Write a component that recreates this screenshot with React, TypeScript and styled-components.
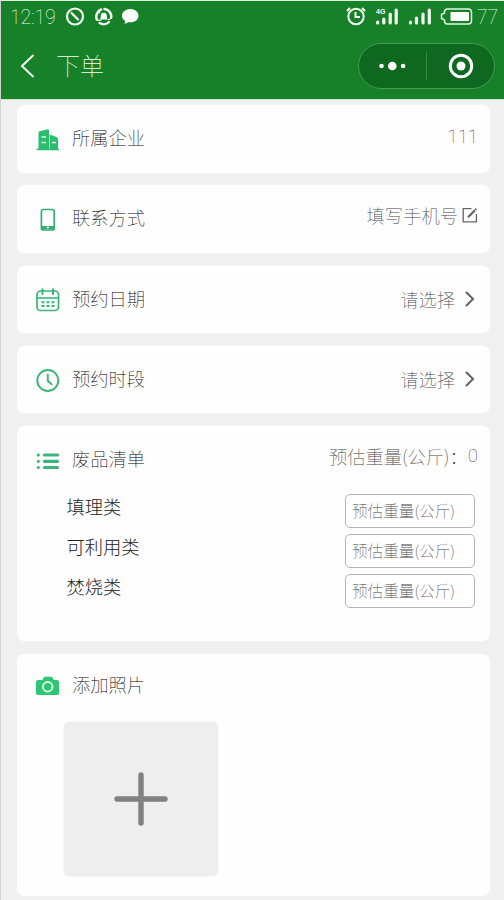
import React from "react";
import styled, { createGlobalStyle } from "styled-components";

const GlobalStyle = createGlobalStyle`
  * { box-sizing: border-box; }
  body {
    margin: 0;
    background: #f0f0f0;
    font-family: "Noto Sans CJK SC", "Noto Sans", sans-serif;
    font-weight: 100;
  }
`;

const Page = styled.div`
  width: 504px;
  height: 900px;
  overflow: hidden;
  background: #f0f0f0;
  border-left: 1px solid #d2d2d2;
`;

const Header = styled.header`
  height: 100px;
  margin-left: -1px;
  background: #168128;
  border-top: 1px solid #d9f3dc;
  border-bottom: 1px solid #c6e8ca;
  color: #f4fff4;
`;

const StatusBar = styled.div`
  height: 33px;
  display: flex;
  justify-content: space-between;
  padding: 0 5px 0 10px;
`;

const StatusGroup = styled.div`
  display: flex;
  align-items: center;
`;

const StatusText = styled.span<{ $width: number }>`
  width: ${(p) => p.$width}px;
  font-family: Roboto, "Noto Sans", sans-serif;
  font-size: 19.5px;
  font-weight: 100;
  line-height: 20px;
  padding-top: 1px;
  white-space: nowrap;
  letter-spacing: -0.1px;
`;

const NavBar = styled.div`
  height: 64px;
  display: flex;
  align-items: center;
  padding: 0 9px 0 20px;
`;

const NavTitle = styled.h1`
  margin: 0 auto 3px 21px;
  font-size: 24px;
  line-height: 36px;
  font-weight: 100;
`;

const Capsule = styled.div`
  width: 137px;
  height: 46px;
  border: 1px solid #459b50;
  border-radius: 23px;
  background: #0e681f;
  display: flex;
  align-items: center;
`;

const CapsuleButton = styled.button`
  flex: 1;
  height: 30px;
  padding: 0;
  border: 0;
  background: none;
  display: flex;
  align-items: center;
  justify-content: center;
`;

const CapsuleDivider = styled.i`
  width: 1px;
  height: 28px;
  background: #388743;
`;

const Cards = styled.main`
  display: flex;
  flex-direction: column;
  gap: 12.8px;
  padding: 5px 14px 0 16px;
`;

const Card = styled.section<{ $height: number }>`
  height: ${(p) => p.$height}px;
  border-radius: 8px;
  background: #fefefe;
  box-shadow: 0 0 3px #f8f8f8;
`;

const CardHead = styled.div<{ $height?: number }>`
  height: ${(p) => p.$height ?? 67}px;
  display: flex;
  align-items: center;
  padding: 0 12px 0 18px;
`;

const IconSlot = styled.span`
  width: 25px;
  height: 25px;
  margin-top: 3px;
  display: flex;
`;

const Label = styled.span`
  margin: 0 auto 3px 12px;
  font-size: 18.3px;
  line-height: 26px;
  color: #000;
`;

const Value = styled.span<{ $lift?: number; $gap?: number }>`
  display: flex;
  align-items: center;
  gap: ${(p) => p.$gap ?? 0}px;
  font-size: 18.3px;
  line-height: 26px;
  color: #444;
  margin-bottom: ${(p) => p.$lift ?? 0}px;
`;

const Digits = styled.span`
  font-family: Roboto, "Noto Sans", sans-serif;
  font-size: 18.5px;
`;

const WasteList = styled.div`
  display: flex;
  flex-direction: column;
  gap: 6px;
  padding: 0 15px 0 49.5px;
  margin-top: 1px;
`;

const WasteRow = styled.label`
  height: 34px;
  display: flex;
  justify-content: space-between;
`;

const WasteName = styled.span`
  margin-top: -1.5px;
  font-size: 18.3px;
  font-weight: 300;
  line-height: 26px;
  color: #222;
`;

const WeightInput = styled.input`
  width: 130px;
  height: 34px;
  padding: 0 6px 3px;
  border: 1px solid #b5b5b5;
  border-radius: 5px;
  background: #fff;
  outline: none;
  font-family: inherit;
  font-size: 15.6px;
  font-weight: 100;
  &::placeholder {
    color: #444;
    opacity: 1;
  }
`;

const AddPhoto = styled.button`
  width: 154px;
  height: 154px;
  margin: 5px 0 0 47px;
  padding: 1px 0 0;
  border: 0;
  border-radius: 6px;
  background: #eee;
  box-shadow: 0 0 2px #e4e4e4;
  display: flex;
  align-items: center;
  justify-content: center;
`;

const green = "#2fb673";

const StatusLeftIcons = () => (
  <svg width="78" height="24" viewBox="62 6 78 24" fill="none">
    <circle cx="75" cy="16.500" r="8" stroke="#f2fff2" strokeWidth="2.200" />
    <path d="M71.500 13l6.500 6.500" stroke="#f2fff2" strokeWidth="2.200" strokeLinecap="round" />
    <g stroke="#f2fff2" strokeLinecap="round">
      <path d="M96.800 19.500a7.800 7.800 0 0 1 4.200-10" strokeWidth="2.500" />
      <path d="M104.500 9a7.800 7.800 0 0 1 6.800 8.500" strokeWidth="2.500" />
      <path d="M109 22a8 8 0 0 1-9.500 1" strokeWidth="2.200" />
      <path d="M101 9.500c-1.500 1-2 2.300-1.800 3.500M111.300 17.500c-.8 1.500-2 2.200-3.300 2M96.800 19.500c1.500 1 3 1 4.200.3" strokeWidth="1.200" />
    </g>
    <circle cx="103.800" cy="15.800" r="3" fill="#fff" />
    <path d="M100.900 16h5.800l.6 3.400h-7z" fill="#fff" />
    <path d="M130.500 9c4.600 0 8 3 8 6.700s-3.400 6.600-8 6.600c-.8 0-1.500-.1-2.300-.2-.9 1-2.400 1.700-4 1.700.8-.8 1-1.700 1-2.700-2-1.300-3.200-3.200-3.200-5.400 0-3.700 3.600-6.700 8.500-6.700z" fill="#fff" />
  </svg>
);

const StatusRightIcons = () => (
  <svg width="132" height="24" viewBox="344 6 132 24" fill="none">
    <g stroke="#f2fff2" strokeWidth="2">
      <circle cx="355" cy="16.500" r="7.700" />
      <path d="M354.500 12v5h4.500" />
      <path d="M346.500 10.500l2-2M363.500 10.500l-2-2" strokeLinecap="round" />
    </g>
    <g stroke="#f2fff2" strokeWidth="3.200" strokeLinecap="round">
      <path d="M376.700 22v1M382.800 19v4M389.200 14v9M395.200 10v13" />
      <path d="M409.500 22v1M415.500 18v5M422 14v9M428.300 10v13" />
    </g>
    <text x="375" y="13.500" fill="#fff" fontSize="7" fontWeight="700" fontFamily="Liberation Sans, sans-serif">4G</text>
    <path d="M443.500 13V12a3 3 0 0 1 3-3h21a3 3 0 0 1 3 3v9a3 3 0 0 1-3 3h-21a3 3 0 0 1-3-3v-1l-3-1.500v-4z" stroke="#e0f8e0" strokeWidth="1.500" />
    <rect x="449.500" y="12" width="18.500" height="9" rx="1" fill="#fff" />
  </svg>
);

const BackIcon = () => (
  <svg width="15" height="26" viewBox="0 0 15 26" fill="none">
    <path d="M13 2.500L2 13l11 10.500" stroke="#f2fff2" strokeWidth="2" strokeLinecap="round" />
  </svg>
);

const MoreIcon = () => (
  <svg width="28" height="12" viewBox="0.700 0 28 12" fill="#fff">
    <circle cx="3.200" cy="6" r="2.300" />
    <circle cx="14" cy="6" r="4.300" />
    <circle cx="24.800" cy="6" r="2.300" />
  </svg>
);

const TargetIcon = () => (
  <svg width="26" height="26" viewBox="0 0 26 26" fill="none">
    <circle cx="13" cy="13" r="10.700" stroke="#fff" strokeWidth="3" />
    <circle cx="13" cy="13" r="4.500" fill="#fff" />
  </svg>
);

const CompanyIcon = () => (
  <svg width="25" height="25" viewBox="0 0 25 25">
    <path d="M3.500 22V4.500L4.500 3.300l8.500-2 1 .8V22zM14.600 22V6.500l7 2.500 1.400 1.500V22z" fill="#2bbd6e" />
    <path d="M1.500 21.500h22.500" stroke={green} strokeWidth="1.500" />
    <path d="M6.500 9h4.500M6.500 14.500h4.500M17 14.500h4" stroke="#dbffe9" strokeWidth="1.300" />
  </svg>
);

const PhoneIcon = () => (
  <svg width="25" height="25" viewBox="0 0 25 25" fill="none">
    <rect x="6.400" y="1.500" width="12.800" height="20.500" rx="1.800" stroke="#37ae72" strokeWidth="1.700" />
    <path d="M6 18h13.500v3.500H6z" fill="#37ae72" />
    <circle cx="12.800" cy="19.600" r="1.100" fill="#fff" />
  </svg>
);

const CalendarIcon = () => (
  <svg width="25" height="25" viewBox="0 0 25 25" fill="none" stroke="#39b578">
    <rect x="2" y="3" width="21.500" height="19.500" rx="3.500" strokeWidth="1.700" />
    <path d="M2 10h21.500" strokeWidth="1.600" />
    <path d="M7.500 1.300v5M18 1.300v5" strokeWidth="2" strokeLinecap="round" />
    <path d="M6.500 14.200h13M6.500 18h13" strokeWidth="1.900" strokeDasharray="3 2" />
  </svg>
);

const ClockIcon = () => (
  <svg width="25" height="25" viewBox="0 0 25 25" fill="none" stroke="#39b578">
    <circle cx="12.800" cy="12.500" r="10.500" strokeWidth="1.900" />
    <path d="M12.800 6.500v6.300l3.700 3.500" strokeWidth="1.900" strokeLinecap="round" strokeLinejoin="round" />
  </svg>
);

const ListIcon = () => (
  <svg width="25" height="25" viewBox="0 0 25 25" stroke="#3bb57b" strokeWidth="3.200" strokeLinecap="round">
    <path d="M3.300 6h.01M3.300 12.300h.01M3.300 18.500h.01M9.500 6h13M9.500 12.300h13M9.500 18.500h13" />
  </svg>
);

const CameraIcon = () => (
  <svg width="25" height="25" viewBox="0 0 25 25">
    <path d="M3 6h4.500l1.200-2.600L10 2.700h6l1.500.7L18.700 6H22a2 2 0 0 1 2 2v11a2 2 0 0 1-2 2H3a2 2 0 0 1-2-2V8a2 2 0 0 1 2-2z" fill="#2fc673" />
    <circle cx="12.700" cy="12.800" r="4.800" fill="none" stroke="#d9fbe6" strokeWidth="1.900" />
  </svg>
);

const EditIcon = () => (
  <svg width="16" height="16" viewBox="0 0 16 16" fill="none" stroke="#666" strokeWidth="1.300">
    <path d="M9.500 1.600H1.200v13.200h13.200V7" />
    <path d="M6 10.200L13 3.200" strokeWidth="2.300" />
    <path d="M13.300 2.700l1-1" strokeWidth="2" />
  </svg>
);

const ChevronIcon = () => (
  <svg width="10" height="16" viewBox="0 0 10 16" fill="none">
    <path d="M1.500 1.500L8 8l-6.500 6.500" stroke="#666" strokeWidth="2.100" strokeLinecap="round" />
  </svg>
);

const PlusIcon = () => (
  <svg width="56" height="56" viewBox="0 0 56 56" stroke="#818181" strokeWidth="5.400" strokeLinecap="round">
    <path d="M28 4v48M4 28h48" />
  </svg>
);

const ChooseValue = styled(Value)`
  padding-right: 3px;
`;

const wasteKinds = ["填理类", "可利用类", "焚烧类"];

export default function App() {
  return (
    <Page>
      <GlobalStyle />
      <Header>
        <StatusBar>
          <StatusGroup>
            <StatusText $width={52}>12:19</StatusText>
            <StatusLeftIcons />
          </StatusGroup>
          <StatusGroup>
            <StatusRightIcons />
            <StatusText $width={22}>77</StatusText>
          </StatusGroup>
        </StatusBar>
        <NavBar>
          <BackIcon />
          <NavTitle>下单</NavTitle>
          <Capsule>
            <CapsuleButton aria-label="more"><MoreIcon /></CapsuleButton>
            <CapsuleDivider />
            <CapsuleButton aria-label="close"><TargetIcon /></CapsuleButton>
          </Capsule>
        </NavBar>
      </Header>
      <Cards>
        <Card $height={67.5}>
          <CardHead>
            <IconSlot><CompanyIcon /></IconSlot>
            <Label>所属企业</Label>
            <Value $lift={4}><Digits>111</Digits></Value>
          </CardHead>
        </Card>
        <Card $height={67.5}>
          <CardHead>
            <IconSlot><PhoneIcon /></IconSlot>
            <Label>联系方式</Label>
            <Value $lift={7} $gap={4}>填写手机号<EditIcon /></Value>
          </CardHead>
        </Card>
        <Card $height={67.5}>
          <CardHead>
            <IconSlot><CalendarIcon /></IconSlot>
            <Label>预约日期</Label>
            <ChooseValue $gap={10}>请选择<ChevronIcon /></ChooseValue>
          </CardHead>
        </Card>
        <Card $height={67.5}>
          <CardHead>
            <IconSlot><ClockIcon /></IconSlot>
            <Label>预约时段</Label>
            <ChooseValue $gap={10}>请选择<ChevronIcon /></ChooseValue>
          </CardHead>
        </Card>
        <Card $height={215}>
          <CardHead>
            <IconSlot><ListIcon /></IconSlot>
            <Label>废品清单</Label>
            <Value $lift={8}>预估重量(公斤)：<Digits>0</Digits></Value>
          </CardHead>
          <WasteList>
            {wasteKinds.map((kind) => (
              <WasteRow key={kind}>
                <WasteName>{kind}</WasteName>
                <WeightInput placeholder="预估重量(公斤)" />
              </WasteRow>
            ))}
          </WasteList>
        </Card>
        <Card $height={242}>
          <CardHead $height={63}>
            <IconSlot><CameraIcon /></IconSlot>
            <Label>添加照片</Label>
          </CardHead>
          <AddPhoto aria-label="add"><PlusIcon /></AddPhoto>
        </Card>
      </Cards>
    </Page>
  );
}
